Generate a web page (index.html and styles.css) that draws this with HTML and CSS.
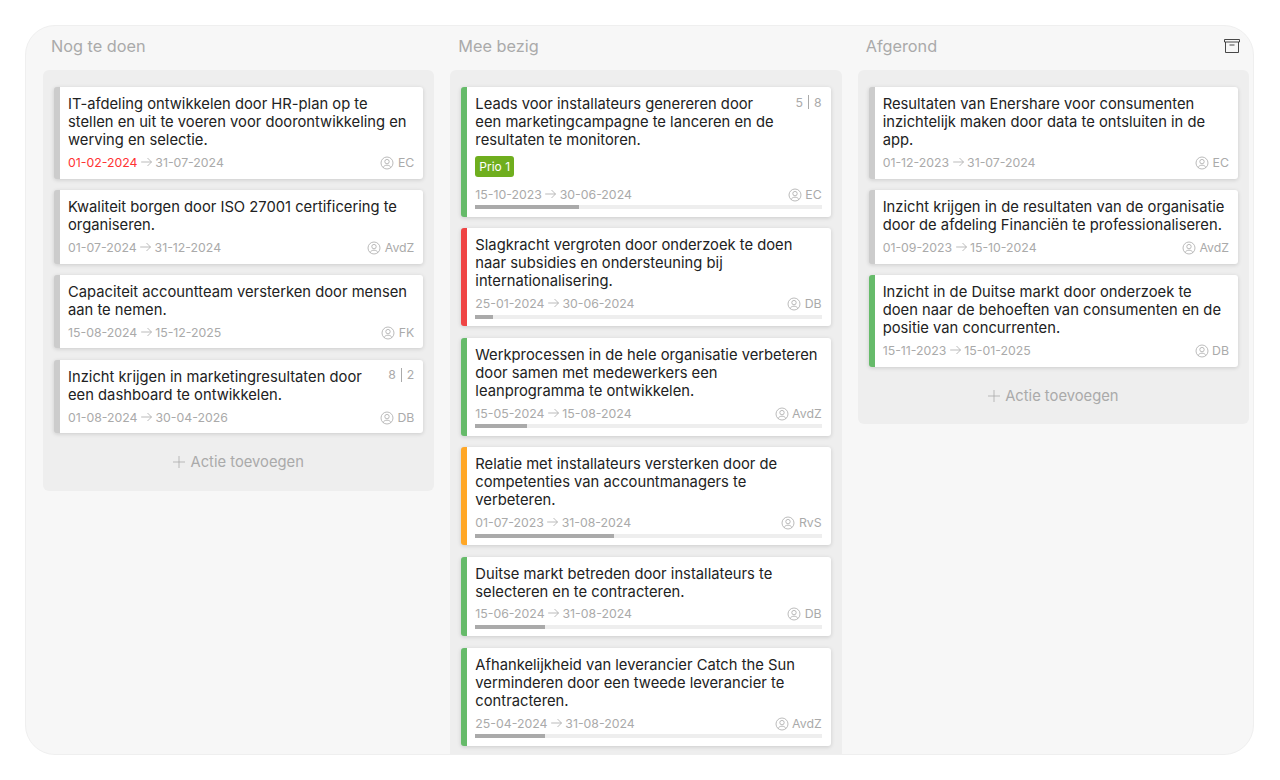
FILE: index.html
```html
<!DOCTYPE html>
<html lang="nl">
<head>
  <meta charset="UTF-8">
  <meta name="viewport" content="width=device-width, initial-scale=1.0">
  <title>Acties</title>
  <link rel="stylesheet" href="styles.css">
</head>
<body>
  <svg class="sprite" width="0" height="0">
    <symbol id="i-user" viewBox="0 0 14 14">
      <circle cx="7" cy="7" r="6" />
      <circle cx="7" cy="5.6" r="2.2" />
      <path d="M3.2 11.6c.5-1.7 2-2.4 3.8-2.4s3.3.7 3.8 2.4" />
    </symbol>
    <symbol id="i-arrow" viewBox="0 0 11 10">
      <path d="M.2 5h10.3M6.5 1l4 4-4 4" />
    </symbol>
  </svg>

  <main class="board">
    <section class="column">
      <h2 class="column-title">Nog te doen</h2>
      <div class="lane">
        <article class="card">
          <div class="card-top"><p class="card-title">IT-afdeling ontwikkelen door HR-plan op te stellen en uit te voeren voor doorontwikkeling en werving en selectie.</p></div>
          <div class="meta"><span class="dates"><span class="late">01-02-2024</span> <svg class="arrow"><use href="#i-arrow" /></svg> 31-07-2024</span><span class="owner"><svg class="user"><use href="#i-user" /></svg> EC</span></div>
        </article>
        <article class="card">
          <div class="card-top"><p class="card-title">Kwaliteit borgen door ISO 27001 certificering te organiseren.</p></div>
          <div class="meta"><span class="dates">01-07-2024 <svg class="arrow"><use href="#i-arrow" /></svg> 31-12-2024</span><span class="owner"><svg class="user"><use href="#i-user" /></svg> AvdZ</span></div>
        </article>
        <article class="card">
          <div class="card-top"><p class="card-title">Capaciteit accountteam versterken door mensen aan te nemen.</p></div>
          <div class="meta"><span class="dates">15-08-2024 <svg class="arrow"><use href="#i-arrow" /></svg> 15-12-2025</span><span class="owner"><svg class="user"><use href="#i-user" /></svg> FK</span></div>
        </article>
        <article class="card">
          <div class="card-top"><p class="card-title">Inzicht krijgen in marketingresultaten door een dashboard te ontwikkelen.</p><span class="score">8<i></i>2</span></div>
          <div class="meta"><span class="dates">01-08-2024 <svg class="arrow"><use href="#i-arrow" /></svg> 30-04-2026</span><span class="owner"><svg class="user"><use href="#i-user" /></svg> DB</span></div>
        </article>
        <button class="add"><svg class="plus" viewBox="0 0 12 12"><path d="M6 0v12M0 6h12" /></svg> Actie toevoegen</button>
      </div>
    </section>

    <section class="column">
      <h2 class="column-title">Mee bezig</h2>
      <div class="lane">
        <article class="card green">
          <div class="card-top"><p class="card-title">Leads voor installateurs genereren door een marketingcampagne te lanceren en de resultaten te monitoren.</p><span class="score">5<i></i>8</span></div>
          <span class="badge">Prio 1</span>
          <div class="meta"><span class="dates">15-10-2023 <svg class="arrow"><use href="#i-arrow" /></svg> 30-06-2024</span><span class="owner"><svg class="user"><use href="#i-user" /></svg> EC</span></div>
          <div class="progress"><div class="progress-fill" style="width: 30%"></div></div>
        </article>
        <article class="card red">
          <div class="card-top"><p class="card-title">Slagkracht vergroten door onderzoek te doen naar subsidies en ondersteuning bij internationalisering.</p></div>
          <div class="meta"><span class="dates">25-01-2024 <svg class="arrow"><use href="#i-arrow" /></svg> 30-06-2024</span><span class="owner"><svg class="user"><use href="#i-user" /></svg> DB</span></div>
          <div class="progress"><div class="progress-fill" style="width: 5%"></div></div>
        </article>
        <article class="card green">
          <div class="card-top"><p class="card-title">Werkprocessen in de hele organisatie verbeteren door samen met medewerkers een leanprogramma te ontwikkelen.</p></div>
          <div class="meta"><span class="dates">15-05-2024 <svg class="arrow"><use href="#i-arrow" /></svg> 15-08-2024</span><span class="owner"><svg class="user"><use href="#i-user" /></svg> AvdZ</span></div>
          <div class="progress"><div class="progress-fill" style="width: 15%"></div></div>
        </article>
        <article class="card orange">
          <div class="card-top"><p class="card-title">Relatie met installateurs versterken door de competenties van accountmanagers te verbeteren.</p></div>
          <div class="meta"><span class="dates">01-07-2023 <svg class="arrow"><use href="#i-arrow" /></svg> 31-08-2024</span><span class="owner"><svg class="user"><use href="#i-user" /></svg> RvS</span></div>
          <div class="progress"><div class="progress-fill" style="width: 40%"></div></div>
        </article>
        <article class="card green">
          <div class="card-top"><p class="card-title">Duitse markt betreden door installateurs te selecteren en te contracteren.</p></div>
          <div class="meta"><span class="dates">15-06-2024 <svg class="arrow"><use href="#i-arrow" /></svg> 31-08-2024</span><span class="owner"><svg class="user"><use href="#i-user" /></svg> DB</span></div>
          <div class="progress"><div class="progress-fill" style="width: 20%"></div></div>
        </article>
        <article class="card green">
          <div class="card-top"><p class="card-title">Afhankelijkheid van leverancier Catch the Sun verminderen door een tweede leverancier te contracteren.</p></div>
          <div class="meta"><span class="dates">25-04-2024 <svg class="arrow"><use href="#i-arrow" /></svg> 31-08-2024</span><span class="owner"><svg class="user"><use href="#i-user" /></svg> AvdZ</span></div>
          <div class="progress"><div class="progress-fill" style="width: 20%"></div></div>
        </article>
      </div>
    </section>

    <section class="column">
      <div class="column-head">
        <h2 class="column-title">Afgerond</h2>
        <svg class="archive" viewBox="0 0 16 14"><path d="M.5 .5h15V3H.5zM1.5 3v10.5h13V3M5.5 6h5" /></svg>
      </div>
      <div class="lane">
        <article class="card">
          <div class="card-top"><p class="card-title">Resultaten van Enershare voor consumenten inzichtelijk maken door data te ontsluiten in de app.</p></div>
          <div class="meta"><span class="dates">01-12-2023 <svg class="arrow"><use href="#i-arrow" /></svg> 31-07-2024</span><span class="owner"><svg class="user"><use href="#i-user" /></svg> EC</span></div>
        </article>
        <article class="card">
          <div class="card-top"><p class="card-title">Inzicht krijgen in de resultaten van de organisatie door de afdeling Financiën te professionaliseren.</p></div>
          <div class="meta"><span class="dates">01-09-2023 <svg class="arrow"><use href="#i-arrow" /></svg> 15-10-2024</span><span class="owner"><svg class="user"><use href="#i-user" /></svg> AvdZ</span></div>
        </article>
        <article class="card green">
          <div class="card-top"><p class="card-title">Inzicht in de Duitse markt door onderzoek te doen naar de behoeften van consumenten en de positie van concurrenten.</p></div>
          <div class="meta"><span class="dates">15-11-2023 <svg class="arrow"><use href="#i-arrow" /></svg> 15-01-2025</span><span class="owner"><svg class="user"><use href="#i-user" /></svg> DB</span></div>
        </article>
        <button class="add"><svg class="plus" viewBox="0 0 12 12"><path d="M6 0v12M0 6h12" /></svg> Actie toevoegen</button>
      </div>
    </section>
  </main>
</body>
</html>
```

FILE: styles.css
```css
* { box-sizing: border-box; }
body { margin: 0; background: #fff; font-family: Inter, "Liberation Sans", sans-serif; color: #222; }
.sprite { position: absolute; }
svg { fill: none; stroke: currentColor; }

.board { display: grid; grid-template-columns: repeat(3, 1fr); gap: 16px; align-items: start; width: 1229px; height: 730px; margin: 25px 0 0 25px; padding: 0 4px 0 17px; background: #f7f7f7; border: 1px solid #efefef; border-radius: 30px; overflow: hidden; }

.column-head { display: flex; justify-content: space-between; align-items: center; padding-right: 9px; }
.column-title { margin: 0; padding: 10px 8px 0; height: 44px; font-size: 16.3px; line-height: 20px; font-weight: 400; color: #aaa; }
.archive { width: 16px; height: 14px; margin: 0 0 5px; color: #333; stroke-width: .9; }

.lane { display: flex; flex-direction: column; gap: 11.5px; padding: 17px 11px 14.5px; background: #eee; border-radius: 6px; }

.card { display: flex; flex-direction: column; padding: 8px 9px 7px 8px; background: #fff; border-left: 6px solid #ccc; border-radius: 3px; box-shadow: 0 1px 4px rgba(0, 0, 0, .15); }
.card.green { border-left-color: #66bb6a; }
.card.red { border-left-color: #ef4444; }
.card.orange { border-left-color: #ffa726; }

.card-top { display: flex; justify-content: space-between; gap: 16px; }
.card-title { flex: 1; margin: 0; font-size: 14.75px; line-height: 18.2px; }
.score { display: flex; align-items: center; height: 14px; font-size: 12.3px; color: #aaa; }
.score i { width: 1px; height: 14px; margin: 0 5px; background: #aaa; }

.badge { align-self: flex-start; margin: 6.5px 0 4px; padding: 2px 4px; font-size: 12px; line-height: 17px; color: #fff; background: #6fae1e; border-radius: 3px; }

.meta { display: flex; justify-content: space-between; align-items: center; margin-top: 4px; height: 18px; font-size: 12.3px; color: #aaa; }
.late { color: #f33; }
.arrow { width: 11px; height: 10px; stroke-width: .8; }
.user { width: 14px; height: 14px; vertical-align: -3px; stroke-width: .8; }
.dates, .owner { white-space: nowrap; }

.progress { height: 4px; margin: 2px 0 .4px; background: #eee; }
.progress-fill { height: 100%; background: #aaa; }

.add { display: flex; justify-content: center; align-items: center; gap: 5px; margin-top: 3.5px; padding: 5px; font: inherit; font-size: 14.75px; color: #aaa; background: none; border: none; }
.plus { width: 12px; height: 12px; stroke-width: .8; }
```
